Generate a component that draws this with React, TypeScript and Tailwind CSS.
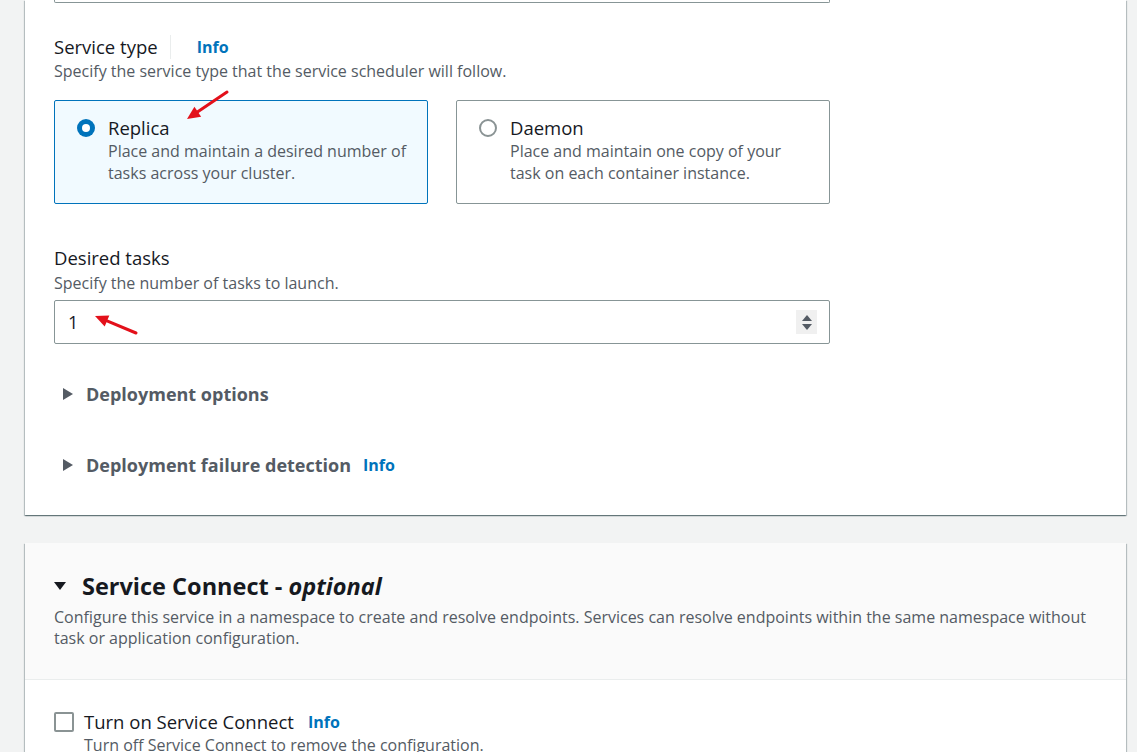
import React from 'react'

const font = { fontFamily: '"Open Sans", "Noto Sans", sans-serif' }

function Info({ className = '' }: { className?: string }) {
  return <span className={`font-bold text-[#0073bb] ${className}`}>Info</span>
}

function Arrow({ x1, y1, x2, y2 }: { x1: number; y1: number; x2: number; y2: number }) {
  // tip at (x2, y2)
  const ang = Math.atan2(y2 - y1, x2 - x1)
  const len = 13
  const w = 6
  const bx = x2 - Math.cos(ang) * len
  const by = y2 - Math.sin(ang) * len
  const px = -Math.sin(ang) * w
  const py = Math.cos(ang) * w
  return (
    <svg className="pointer-events-none absolute left-0 top-0" width="1137" height="752">
      <line x1={x1} y1={y1} x2={bx} y2={by} stroke="#e3101a" strokeWidth="3" strokeLinecap="round" />
      <polygon points={`${x2},${y2} ${bx + px},${by + py} ${bx - px},${by - py}`} fill="#e3101a" />
    </svg>
  )
}

function Caret({ open = false, dark = false }: { open?: boolean; dark?: boolean }) {
  return (
    <svg width="12" height="12" viewBox="0 0 12 12" className="shrink-0">
      {open ? (
        <polygon points="0,2 12,2 6,10" fill={dark ? '#16191f' : '#545b64'} />
      ) : (
        <polygon points="1,0 11,6 1,12" fill={dark ? '#16191f' : '#545b64'} />
      )}
    </svg>
  )
}

function RadioCard({
  title,
  lines,
  checked,
}: {
  title: string
  lines: string[]
  checked?: boolean
}) {
  return (
    <div
      className={`flex h-[104px] w-[374px] gap-[13px] rounded-[2px] border pl-[22px] pt-[15px] ${
        checked ? 'border-[#0073bb] bg-[#f1faff]' : 'border-[#879596] bg-white'
      }`}
    >
      <div className="pt-[3px]">
        {checked ? (
          <div className="flex h-[18px] w-[18px] items-center justify-center rounded-full bg-[#0073bb]">
            <div className="h-[8px] w-[8px] rounded-full bg-white" />
          </div>
        ) : (
          <div className="h-[18px] w-[18px] rounded-full border-2 border-[#8a9394] bg-white" />
        )}
      </div>
      <div>
        <div className="text-[18.5px] leading-[24px] text-[#16191f]">{title}</div>
        {lines.map((l) => (
          <div key={l} className="text-[16px] leading-[22px] text-[#545b64]">
            {l}
          </div>
        ))}
      </div>
    </div>
  )
}

export default function App() {
  return (
    <div
      className="relative h-[752px] w-[1137px] overflow-hidden bg-[#f2f3f3] pl-[25px] pr-[11px]"
      style={font}
    >
      <div className="bg-white pb-[37px] pl-[29px] shadow-[0_1px_1px_0_rgba(0,28,36,0.35),1px_1px_1px_0_rgba(0,28,36,0.2),-1px_1px_1px_0_rgba(0,28,36,0.2)]">
        <div className="h-[3px] w-[776px] rounded-b-[2px] border-x border-b border-[#879596]" />

        <div className="mt-[32px] flex items-center text-[18.5px] leading-[24px] text-[#16191f]">
          <span>Service type</span>
          <span className="mx-[12px] h-[24px] w-px bg-[#eaeded]" />
          <Info className="ml-[14px] text-[16px]" />
        </div>
        <div className="mt-[1px] text-[16px] leading-[22px] text-[#545b64]">
          Specify the service type that the service scheduler will follow.
        </div>

        <div className="mt-[18px] flex gap-[28px]">
          <RadioCard
            checked
            title="Replica"
            lines={['Place and maintain a desired number of', 'tasks across your cluster.']}
          />
          <RadioCard
            title="Daemon"
            lines={['Place and maintain one copy of your', 'task on each container instance.']}
          />
        </div>

        <div className="mt-[42px] text-[18.5px] leading-[24px] text-[#16191f]">Desired tasks</div>
        <div className="mt-[2px] text-[16px] leading-[22px] text-[#545b64]">
          Specify the number of tasks to launch.
        </div>
        <div className="mt-[6px] flex h-[44px] w-[776px] items-center justify-between rounded-[2px] border border-[#879596] pl-[13px] pr-[12px]">
          <span className="text-[18px] text-[#16191f]">1</span>
          <div className="flex h-[24px] w-[21px] flex-col items-center justify-center gap-[3px] bg-[#f0f0f0]">
            <svg width="10" height="6" viewBox="0 0 10 6">
              <polygon points="5,0 10,6 0,6" fill="#545b64" />
            </svg>
            <svg width="10" height="6" viewBox="0 0 10 6">
              <polygon points="0,0 10,0 5,6" fill="#545b64" />
            </svg>
          </div>
        </div>

        <div className="mt-[37px] flex items-center gap-[12px] pl-[8px] text-[18px] font-bold leading-[26px] text-[#545b64]">
          <Caret />
          <span>Deployment options</span>
        </div>

        <div className="mt-[45px] flex items-center gap-[12px] pl-[8px] text-[18px] font-bold leading-[26px] text-[#545b64]">
          <Caret />
          <span>Deployment failure detection</span>
          <Info className="text-[16px]" />
        </div>
      </div>

      <div className="mt-[28px] bg-white shadow-[0_1px_1px_0_rgba(0,28,36,0.35),1px_1px_1px_0_rgba(0,28,36,0.2),-1px_1px_1px_0_rgba(0,28,36,0.2)]">
        <div className="border-b border-[#eaeded] bg-[#fafafa] pb-[30px] pl-[29px] pt-[27px]">
          <div className="flex items-center gap-[16px] text-[23.5px] font-bold leading-[32px] text-[#16191f]">
            <Caret open dark />
            <span>
              Service Connect - <i>optional</i>
            </span>
          </div>
          <div className="mt-[5px] w-[1045px] text-[16px] leading-[21px] text-[#545b64]">
            Configure this service in a namespace to create and resolve endpoints. Services can resolve endpoints
            within the same namespace without task or application configuration.
          </div>
        </div>
        <div className="pl-[29px] pt-[30px]">
          <div className="flex items-center gap-[10px] text-[18.5px] leading-[24px] text-[#16191f]">
            <div className="h-[20px] w-[20px] rounded-[2px] border-2 border-[#8a9394] bg-white" />
            <span>Turn on Service Connect</span>
            <Info className="ml-[4px] text-[16px]" />
          </div>
          <div className="ml-[30px] mt-[0px] text-[16px] leading-[22px] text-[#545b64]">
            Turn off Service Connect to remove the configuration.
          </div>
        </div>
      </div>

      <Arrow x1={227} y1={92} x2={187} y2={119} />
      <Arrow x1={136} y1={333} x2={95} y2={316} />
    </div>
  )
}
